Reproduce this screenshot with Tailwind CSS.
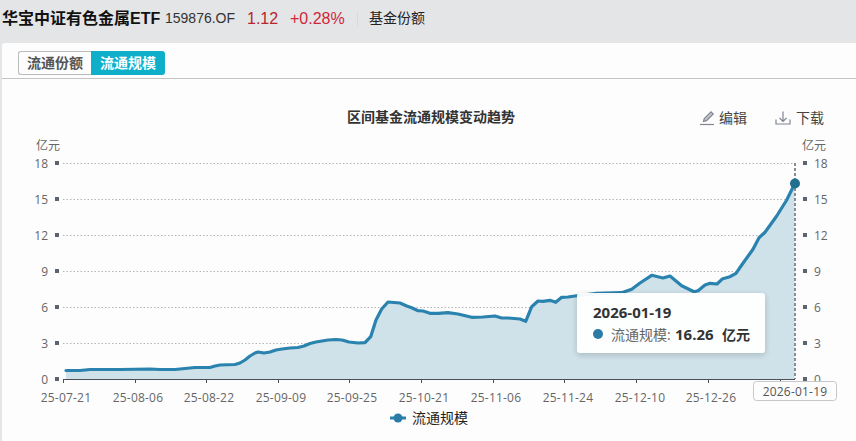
<!DOCTYPE html>
<html lang="zh">
<head>
<meta charset="utf-8">
<script src="https://cdn.jsdelivr.net/npm/@tailwindcss/browser@4"></script>
</head>
<body>
<div class="w-[856px] h-[441px] overflow-hidden flex flex-col bg-[#e4e5e7] font-['Liberation_Sans','Noto_Sans_CJK_SC',sans-serif]">
  <header class="h-[43px] shrink-0 flex items-center pl-[2px] pb-[6px] text-[#333]">
    <h1 class="w-[163px] text-[16px] font-bold text-[#111] whitespace-nowrap">华宝中证有色金属ETF</h1>
    <span class="w-[82px] text-[14px]">159876.OF</span>
    <span class="w-[43px] text-[16px] text-[#b8262c]">1.12</span>
    <span class="w-[67px] text-[16px] text-[#d0273a]">+0.28%</span>
    <span class="w-px h-[14px] bg-[#d8d9db] mr-[11px]"></span>
    <span class="text-[14px] text-[#222]">基金份额</span>
  </header>
  <main class="flex-1 ml-[2px] bg-[#fdfdfd] rounded-tl-[3px] flex flex-col min-h-0">
    <nav class="h-[36px] shrink-0 border-b border-[#c4c4c4] pt-[8px] pl-[16px] flex items-start">
      <div class="flex h-[24px] text-[14px] font-bold">
        <span class="w-[73px] flex items-center justify-center border border-r-0 border-[#bbb] rounded-l-[3px] text-[#555]">流通份额</span>
        <span class="w-[74px] flex items-center justify-center bg-[#0fafca] rounded-r-[3px] text-white">流通规模</span>
      </div>
    </nav>
    <section class="relative flex-1 min-h-0">
      <svg class="absolute left-[-2px] top-[-79px]" width="856" height="441" viewBox="0 0 856 441" fill="#666" font-size="12" font-family="'Open Sans','Noto Sans CJK SC',sans-serif">
        <text x="431" y="122" text-anchor="middle" font-size="14" font-weight="700" fill="#333" font-family="'Liberation Sans','Noto Sans CJK SC',sans-serif">区间基金流通规模变动趋势</text>

        <g fill="none" stroke="#80858f" stroke-width="1.2">
          <path d="M700 124.500H714"/>
          <path d="M703.500 121.500l.8-3 6.700-6.700 2.200 2.200-6.700 6.700z" fill="#c4c7cc"/>
          <path d="M776 119.500v4.500h14v-4.500"/>
          <path d="M783 111.500v10M779.500 118l3.500 3.500 3.500-3.500"/>
        </g>
        <g font-size="14" fill="#444" font-family="'Liberation Sans','Noto Sans CJK SC',sans-serif">
          <text x="719" y="123">编辑</text>
          <text x="796" y="123">下载</text>
        </g>

        <g stroke="#b5b5b5" stroke-width="1" stroke-dasharray="1.500 2">
          <path d="M63 163.500H795M63 199.500H795M63 235.500H795M63 271.500H795M63 307.500H795M63 343.500H795"/>
        </g>

        <path fill="#cfe1e9" d="M66 379V370.500L80 370.500 90 369.500 120 369.500 150 369 160 369.500 175 369.500 185 368.500 195 367.500 210 367.500 215 366 220 365 235 364.500 240 363 245 360 250 356 255 353 258 352 264 353 270 352 276 350 282 349 290 348 298 347.500 304 346 310 343.500 316 342 322 341 328 340 336 339.500 342 340 349 342 358 343 365 342.700 370.700 336.700 376 320 381.700 309 388 302 400 303 406.700 306 411.700 307.700 418 310.700 423 311 430 313.300 438 313.300 448 312.700 458 314 471.700 317.300 483 317 495 316 501.700 318 508 318 520 319 525.700 321.300 531.700 306.700 538 301 543 301.300 550 300.300 555.700 302.300 561.700 297.300 568 297 575 296 596.700 293.300 621.700 292.700 631.700 289.300 640 283 651.700 275.300 663 278 670 276 681.700 285.700 694 291.700 698 290.700 705 285 710 283.300 717 284 722.700 278.700 730 276.700 736 273.300 741.700 265 753 249.300 759 237.700 765 232.300 776.700 216 786.700 200 794.700 183.700V379Z"/>
        <path fill="none" stroke="#2a83ae" stroke-width="3.2" stroke-linejoin="round" stroke-linecap="round" d="M66 370.500L80 370.500 90 369.500 120 369.500 150 369 160 369.500 175 369.500 185 368.500 195 367.500 210 367.500 215 366 220 365 235 364.500 240 363 245 360 250 356 255 353 258 352 264 353 270 352 276 350 282 349 290 348 298 347.500 304 346 310 343.500 316 342 322 341 328 340 336 339.500 342 340 349 342 358 343 365 342.700 370.700 336.700 376 320 381.700 309 388 302 400 303 406.700 306 411.700 307.700 418 310.700 423 311 430 313.300 438 313.300 448 312.700 458 314 471.700 317.300 483 317 495 316 501.700 318 508 318 520 319 525.700 321.300 531.700 306.700 538 301 543 301.300 550 300.300 555.700 302.300 561.700 297.300 568 297 575 296 596.700 293.300 621.700 292.700 631.700 289.300 640 283 651.700 275.300 663 278 670 276 681.700 285.700 694 291.700 698 290.700 705 285 710 283.300 717 284 722.700 278.700 730 276.700 736 273.300 741.700 265 753 249.300 759 237.700 765 232.300 776.700 216 786.700 200 794.700 183.700"/>

        <path stroke="#888e94" stroke-width="2" stroke-dasharray="3 2" d="M795 163V379"/>
        <circle cx="795" cy="183.500" r="5" fill="#22708f"/>

        <path stroke="#4a5058" stroke-width="1" fill="none" d="M63 379.500H795M63.500 380V383M135.500 380V383M206.500 380V383M278.500 380V383M349.500 380V383M421.500 380V383M493.500 380V383M564.500 380V383M636.500 380V383M708.500 380V383M780.500 380V383"/>

        <g fill="#5b6270">
          <rect x="55" y="161" width="4" height="4"/><rect x="55" y="197" width="4" height="4"/><rect x="55" y="233" width="4" height="4"/><rect x="55" y="269" width="4" height="4"/><rect x="55" y="305" width="4" height="4"/><rect x="55" y="341" width="4" height="4"/><rect x="55" y="377" width="4" height="4"/>
          <rect x="803" y="161" width="4" height="4"/><rect x="803" y="197" width="4" height="4"/><rect x="803" y="233" width="4" height="4"/><rect x="803" y="269" width="4" height="4"/><rect x="803" y="305" width="4" height="4"/><rect x="803" y="341" width="4" height="4"/><rect x="803" y="377" width="4" height="4"/>
        </g>
        <g text-anchor="end">
          <text x="48" y="168">18</text><text x="48" y="204">15</text><text x="48" y="240">12</text><text x="48" y="276">9</text><text x="48" y="312">6</text><text x="48" y="348">3</text><text x="48" y="384">0</text>
          <text x="60" y="150">亿元</text>
        </g>
        <g>
          <text x="814" y="168">18</text><text x="814" y="204">15</text><text x="814" y="240">12</text><text x="814" y="276">9</text><text x="814" y="312">6</text><text x="814" y="348">3</text><text x="814" y="384">0</text>
          <text x="802" y="150">亿元</text>
        </g>
        <g text-anchor="middle" letter-spacing="0.2">
          <text x="66" y="402">25-07-21</text><text x="138" y="402">25-08-06</text><text x="209" y="402">25-08-22</text><text x="281" y="402">25-09-09</text><text x="352" y="402">25-09-25</text><text x="424" y="402">25-10-21</text><text x="496" y="402">25-11-06</text><text x="568" y="402">25-11-24</text><text x="640" y="402">25-12-10</text><text x="711" y="402">25-12-26</text>
        </g>

        <rect x="753.500" y="381.500" width="83" height="19" rx="3" fill="#fdfdfd" stroke="#c8c8c8"/>
        <text x="795" y="396" text-anchor="middle" letter-spacing="0.2" fill="#555">2026-01-19</text>

        <path d="M390 418H406" stroke="#2a83ae" stroke-width="3"/>
        <circle cx="398" cy="418" r="4.500" fill="#2a7ca6"/>
        <text x="412" y="423" font-size="14" fill="#222">流通规模</text>
      </svg>

      <aside class="absolute left-[575px] top-[214px] w-[188px] h-[60px] bg-white/95 rounded-[3px] shadow-[0_2px_6px_rgba(0,0,0,0.18)] pl-[16px] pt-[9px] text-[#333] font-['Open_Sans','Noto_Sans_CJK_SC',sans-serif]">
        <div class="text-[15px] font-bold leading-[20px]">2026-01-19</div>
        <div class="flex items-center mt-[2px] h-[20px]">
          <span class="w-[10px] h-[10px] rounded-full bg-[#2a7ca6] mr-[8px]"></span>
          <span class="text-[14px] text-[#666] w-[64px] whitespace-nowrap">流通规模:</span>
          <span class="text-[15px] font-bold w-[47px]">16.26</span>
          <span class="text-[14px] font-bold">亿元</span>
        </div>
      </aside>
    </section>
  </main>
</div>
</body>
</html>
